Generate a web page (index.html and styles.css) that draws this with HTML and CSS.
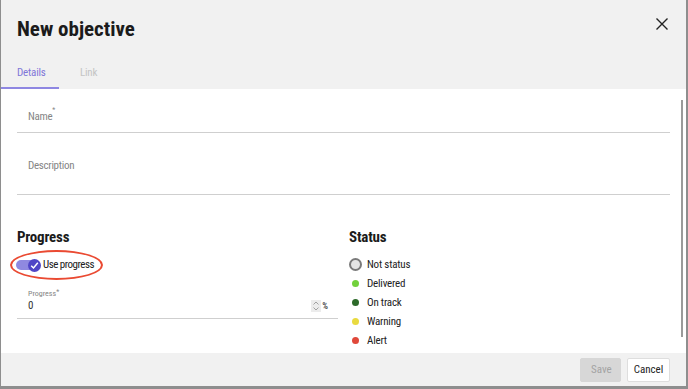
FILE: index.html
```html
<!DOCTYPE html>
<html lang="en">
<head>
    <meta charset="UTF-8">
    <title>New objective</title>
    <link rel="stylesheet" href="styles.css">
</head>
<body>
    <div class="dialog">
        <div class="dialog-header">
            <div class="title-row">
                <h1 class="dialog-title">New objective</h1>
                <button class="close-btn" aria-label="Close">
                    <svg width="12" height="12" viewBox="0 0 12 12">
                        <path d="M0.5 0.5 L11.5 11.5 M11.5 0.5 L0.5 11.5" stroke="#222" stroke-width="1.4" fill="none"/>
                    </svg>
                </button>
            </div>
            <div class="tabs">
                <div class="tab active">Details</div>
                <div class="tab">Link</div>
            </div>
        </div>

        <div class="dialog-body">
            <div class="field field-name">
                <span class="field-label">Name<sup>*</sup></span>
            </div>
            <div class="field field-description">
                <span class="field-label">Description</span>
            </div>

            <div class="columns">
                <div class="column">
                    <h2 class="section-title">Progress</h2>
                    <div class="use-progress">
                        <div class="toggle">
                            <div class="toggle-track"></div>
                            <div class="toggle-knob">
                                <svg width="9" height="9" viewBox="0 0 9 9">
                                    <path d="M1.2 4.8 L3.5 7 L7.8 1.8" stroke="#fff" stroke-width="1.5" fill="none"/>
                                </svg>
                            </div>
                        </div>
                        <span class="toggle-label">Use progress</span>
                    </div>
                    <div class="progress-field">
                        <div class="small-label">Progress<sup>*</sup></div>
                        <div class="progress-input">
                            <span class="progress-value">0</span>
                            <span class="spinner">
                                <svg width="8" height="10" viewBox="0 0 8 10">
                                    <path d="M1.5 3.5 L4 1 L6.5 3.5 M1.5 6.5 L4 9 L6.5 6.5" stroke="#999" stroke-width="0.9" fill="none"/>
                                </svg>
                            </span>
                            <span class="percent">%</span>
                        </div>
                    </div>
                </div>

                <div class="column">
                    <h2 class="section-title">Status</h2>
                    <ul class="status-list">
                        <li><span class="status-ring"></span>Not status</li>
                        <li><span class="status-dot delivered"></span>Delivered</li>
                        <li><span class="status-dot on-track"></span>On track</li>
                        <li><span class="status-dot warning"></span>Warning</li>
                        <li><span class="status-dot alert"></span>Alert</li>
                    </ul>
                </div>
            </div>

            <div class="scroll-thumb"></div>
        </div>

        <div class="dialog-footer">
            <button class="btn btn-save" disabled>Save</button>
            <button class="btn btn-cancel">Cancel</button>
        </div>
    </div>
</body>
</html>
```

FILE: styles.css
```css
* {
    box-sizing: border-box;
}

body {
    margin: 0;
    background-color: #8e8e8e;
    font-family: 'Liberation Sans Narrow', 'Roboto Condensed', 'DejaVu Sans', sans-serif;
    font-stretch: condensed;
    color: #222;
}

.dialog {
    margin-left: 1px;
    width: 685px;
    height: 386px;
    display: flex;
    flex-direction: column;
    background-color: #fff;
}

.dialog-header {
    background-color: #f1f1f1;
    height: 89px;
    display: flex;
    flex-direction: column;
    justify-content: space-between;
}

.title-row {
    display: flex;
    justify-content: space-between;
    align-items: flex-start;
    padding: 16px 18px 0 16px;
}

.dialog-title {
    margin: 0;
    font-size: 21px;
    line-height: 26px;
    font-weight: bold;
    color: #1b1b1b;
}

.close-btn {
    background: none;
    border: none;
    padding: 0;
    margin-top: 2px;
    width: 12px;
    height: 12px;
    cursor: pointer;
}

.close-btn svg {
    display: block;
}

.tabs {
    display: flex;
}

.tab {
    padding: 0 16px 7px 16px;
    font-size: 11px;
    line-height: 14px;
    letter-spacing: -0.2px;
    color: #c4c4c4;
    border-bottom: 2px solid transparent;
}

.tab.active {
    width: 58px;
    color: #7f76d8;
    border-bottom-color: #8e87e2;
    margin-right: 5px;
}

.dialog-body {
    position: relative;
    flex: 1;
    padding: 0 16px;
    overflow: hidden;
}

.scroll-thumb {
    position: absolute;
    right: 3px;
    top: 11px;
    width: 2px;
    height: 237px;
    background-color: #9a9a9a;
}

.field {
    border-bottom: 1px solid #cfcfcf;
    padding-left: 11px;
}

.field-name {
    height: 44px;
    padding-top: 16px;
}

.field-description {
    height: 62px;
    padding-top: 21px;
}

.field-label {
    font-size: 11px;
    line-height: 14px;
    letter-spacing: -0.3px;
    color: #858585;
}

sup {
    font-size: 7px;
    vertical-align: top;
    position: relative;
    top: -2px;
}

.columns {
    display: grid;
    grid-template-columns: 1fr 1fr;
    gap: 11px;
}

.section-title {
    margin: 33px 0 0 0;
    font-size: 15px;
    line-height: 18px;
    font-weight: bold;
    letter-spacing: -0.2px;
    color: #1b1b1b;
}

.use-progress {
    display: inline-flex;
    align-items: center;
    gap: 2px;
    margin: 4px 0 0 -7px;
    padding: 6px 7px 6px 4px;
    border: 2px solid #ea4a32;
    border-radius: 50%;
}

.toggle {
    position: relative;
    width: 25px;
    height: 13px;
    display: flex;
    align-items: center;
}

.toggle-track {
    width: 22px;
    height: 10px;
    border-radius: 5px;
    background-color: #8f89e0;
}

.toggle-knob {
    position: absolute;
    right: 0;
    top: 0;
    width: 13px;
    height: 13px;
    border-radius: 50%;
    background-color: #4f45c6;
    display: flex;
    justify-content: center;
    align-items: center;
}

.toggle-knob svg {
    display: block;
}

.toggle-label {
    font-size: 11px;
    line-height: 14px;
    letter-spacing: -0.5px;
    color: #222;
}

.progress-field {
    margin-top: 9px;
    padding: 0 10px 6px 11px;
    border-bottom: 1px solid #cfcfcf;
}

.small-label {
    font-size: 8px;
    line-height: 10px;
    color: #858585;
}

.progress-input {
    display: flex;
    align-items: center;
    height: 13px;
}

.progress-value {
    flex: 1;
    font-size: 11px;
    color: #333;
}

.spinner {
    display: flex;
    justify-content: center;
    align-items: center;
    width: 10px;
    height: 12px;
    background-color: #ececec;
}

.spinner svg {
    display: block;
}

.percent {
    margin-left: 1px;
    font-size: 9px;
    font-weight: bold;
    color: #555;
}

.status-list {
    list-style: none;
    margin: 9px 0 0 0;
    padding: 0;
}

.status-list li {
    display: flex;
    align-items: center;
    height: 19px;
    font-size: 11px;
    letter-spacing: -0.2px;
    color: #222;
}

.status-ring {
    width: 13px;
    height: 13px;
    margin-right: 5px;
    border: 2px solid #7a7a7a;
    border-radius: 50%;
    background-color: #e4e4e4;
}

.status-dot {
    width: 7px;
    height: 7px;
    margin: 0 8px 0 3px;
    border-radius: 50%;
}

.delivered { background-color: #72d13c; }
.on-track { background-color: #2d6a2a; }
.warning { background-color: #e9da3f; }
.alert { background-color: #e0483a; }

.dialog-footer {
    height: 33px;
    background-color: #f1f1f1;
    display: flex;
    justify-content: flex-end;
    align-items: center;
    gap: 6px;
    padding: 0 16px;
}

.btn {
    height: 24px;
    padding: 0 10px;
    font-family: inherit;
    font-size: 11px;
    border-radius: 2px;
}

.btn-save {
    width: 41px;
    background-color: #d7d7d7;
    border: 1px solid #d7d7d7;
    color: #a3a3a3;
}

.btn-cancel {
    width: 43px;
    padding: 0;
    background-color: #fff;
    border: 1px solid #dedede;
    color: #222;
}
```
